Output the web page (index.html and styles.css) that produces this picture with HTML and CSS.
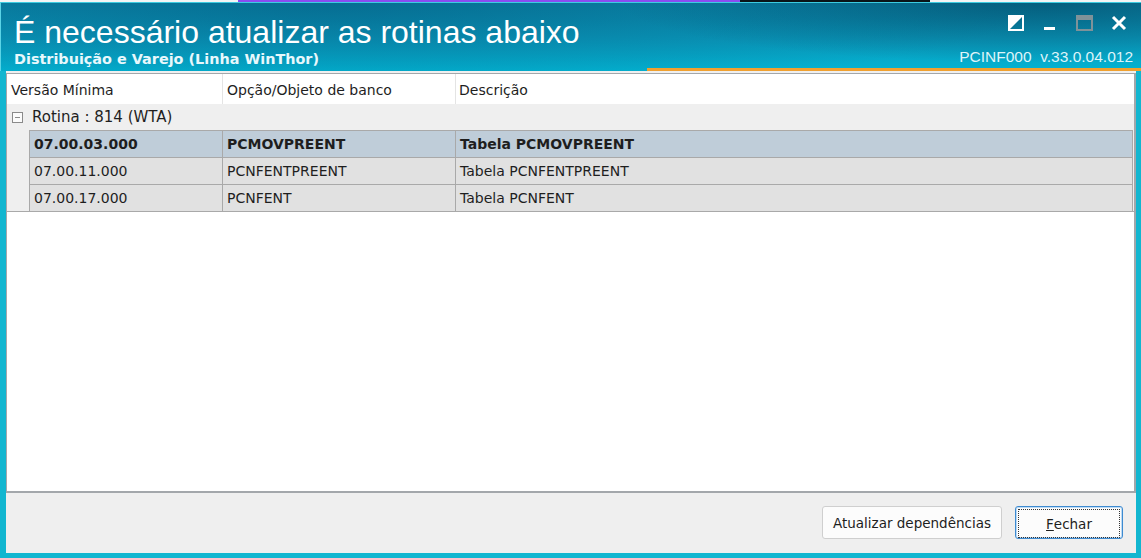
FILE: index.html
```html
<!DOCTYPE html>
<html lang="pt-BR">
<head>
    <meta charset="UTF-8">
    <title>É necessário atualizar as rotinas abaixo</title>
    <link rel="stylesheet" href="styles.css">
</head>
<body>
    <div class="win">
        <div class="behind">
            <span class="bh-white"></span>
            <span class="bh-purple"></span>
            <span class="bh-black"></span>
            <span class="bh-rest"></span>
        </div>
        <div class="titlebar">
            <div class="title-row">
                <h1>É necessário atualizar as rotinas abaixo</h1>
                <div class="ctrls">
                    <svg width="16" height="16" viewBox="0 0 16 16"><rect x="1" y="1" width="14" height="14" fill="none" stroke="#fff" stroke-width="2"/><polygon points="0,0 16,0 0,16" fill="#fff"/></svg>
                    <svg width="16" height="16" viewBox="0 0 16 16"><rect x="2" y="12" width="11" height="3" fill="#fff"/></svg>
                    <svg width="17" height="16" viewBox="0 0 17 16"><rect x="1" y="1" width="15" height="14" fill="none" stroke="#7f9299" stroke-width="2"/><rect x="1" y="1" width="15" height="4" fill="#7f9299"/></svg>
                    <svg width="16" height="16" viewBox="0 0 16 16"><path d="M2 2 L14 14 M14 2 L2 14" stroke="#fff" stroke-width="3"/></svg>
                </div>
            </div>
            <div class="sub-row">
                <span class="sub">Distribuição e Varejo (Linha WinThor)</span>
                <span class="ver">PCINF000&nbsp; v.33.0.04.012</span>
            </div>
        </div>
        <div class="client">
            <div class="grid">
                <div class="hdr">
                    <div class="c1">Versão Mínima</div>
                    <div class="c2">Opção/Objeto de banco</div>
                    <div class="c3">Descrição</div>
                </div>
                <div class="group">
                    <span class="toggle"></span>
                    <span>Rotina : 814 (WTA)</span>
                </div>
                <div class="rows">
                    <div class="row sel">
                        <div class="c1">07.00.03.000</div>
                        <div class="c2">PCMOVPREENT</div>
                        <div class="c3">Tabela PCMOVPREENT</div>
                    </div>
                    <div class="row">
                        <div class="c1">07.00.11.000</div>
                        <div class="c2">PCNFENTPREENT</div>
                        <div class="c3">Tabela PCNFENTPREENT</div>
                    </div>
                    <div class="row">
                        <div class="c1">07.00.17.000</div>
                        <div class="c2">PCNFENT</div>
                        <div class="c3">Tabela PCNFENT</div>
                    </div>
                </div>
            </div>
            <div class="actions">
                <button class="btn">Atualizar dependências</button>
                <button class="btn focus"><span class="inner"><u>F</u>echar</span></button>
            </div>
        </div>
    </div>
</body>
</html>
```

FILE: styles.css
```css
body {
    margin: 0;
    font-family: "DejaVu Sans", sans-serif;
    font-size: 14px;
    color: #1e1e1e;
}
.win {
    width: 1141px;
    height: 558px;
    display: flex;
    flex-direction: column;
    overflow: hidden;
}
.behind {
    display: flex;
    height: 2px;
}
.bh-white { width: 238px; background: #f4f4f4; }
.bh-purple { width: 502px; background: #8a4cf0; }
.bh-black { width: 190px; background: #0a1418; }
.bh-rest { flex: 1; background: #f4f4f4; }
.titlebar {
    height: 68px;
    border-top: 1px solid #3ccbe0;
    border-left: 1px solid #5ad4e6;
    background:
        radial-gradient(ellipse 420px 60px at 1040px 0px, rgba(0, 60, 90, 0.55), rgba(0, 60, 90, 0)),
        radial-gradient(ellipse 700px 90px at 330px 2px, rgba(0, 80, 120, 0.45), rgba(0, 80, 120, 0)),
        linear-gradient(180deg, #0b86a8 0%, #0a9bbd 55%, #03b3d2 100%);
    color: #fff;
    display: flex;
    flex-direction: column;
}
.title-row {
    display: flex;
    justify-content: space-between;
    height: 45px;
}
h1 {
    margin: 0;
    padding: 11px 0 0 13px;
    font-family: "Liberation Sans", Arial, sans-serif;
    font-weight: normal;
    font-size: 32px;
    line-height: 36px;
}
.ctrls {
    display: flex;
    gap: 18px;
    padding: 12px 14px 0 0;
}
.sub-row {
    display: flex;
    justify-content: space-between;
    align-items: flex-end;
    flex: 1;
}
.sub {
    font-family: "DejaVu Sans", sans-serif;
    font-weight: bold;
    font-size: 14.4px;
    padding: 0 0 4px 13px;
    color: #e8f8fc;
}
.ver {
    width: 486px;
    text-align: right;
    padding: 0 8px 2px 0;
    border-bottom: 3px solid #f0a030;
    font-family: "Liberation Sans", Arial, sans-serif;
    font-size: 15.5px;
    color: #dff4f9;
}
.client {
    flex: 1;
    background: #efefef;
    border-left: 6px solid #12b6d0;
    border-right: 5px solid #12b6d0;
    border-bottom: 5px solid #12b6d0;
    display: flex;
    flex-direction: column;
}
.grid {
    margin-top: 2px;
    height: 417px;
    background: #fff;
    border: 1px solid #a3a7ab;
    border-right-width: 2px;
    border-bottom-width: 2px;
}
.hdr, .row {
    display: grid;
    grid-template-columns: 216px 233px 1fr;
}
.hdr {
    height: 30px;
}
.hdr div {
    padding: 2px 0 0 4px;
    line-height: 28px;
}
.hdr .c1, .hdr .c2 { border-right: 1px solid #e4e4e4; }
.hdr .c3 { padding-left: 3px; }
.group {
    height: 26px;
    background: #efefef;
    display: flex;
    align-items: center;
    gap: 9px;
    padding-left: 5px;
    font-size: 15px;
}
.toggle {
    width: 9px;
    height: 9px;
    border: 1px solid #8a8a8a;
    background: linear-gradient(#8a8a8a, #8a8a8a) center / 5px 1px no-repeat, #fbfbfb;
}
.rows {
    background: #efefef;
    padding-left: 22px;
    padding-right: 1px;
    border-bottom: 1px solid #a9a9a9;
}
.row {
    grid-template-columns: 193px 233px 1fr;
    height: 26px;
    line-height: 26px;
    background: #e1e1e1;
    border-top: 1px solid #a9a9a9;
    border-left: 1px solid #a9a9a9;
    border-right: 1px solid #a9a9a9;
}
.row div { padding-left: 4px; }
.row .c1, .row .c2 { border-right: 1px solid #a9a9a9; }
.row.sel {
    background: #bfcdd9;
    font-weight: bold;
}
.actions {
    flex: 1;
    display: flex;
    justify-content: flex-end;
    align-items: flex-start;
    gap: 13px;
    padding: 13px 13px 0 0;
}
.btn {
    height: 33px;
    padding: 0 10px;
    font-family: "DejaVu Sans", sans-serif;
    font-size: 13.5px;
    color: #1e1e1e;
    background: #fcfcfc;
    border: 1px solid #cfcfcf;
    border-radius: 3px;
}
.btn.focus {
    width: 108px;
    padding: 2px;
    border: 1px solid #3d8ad0;
    box-shadow: inset 0 0 0 1px #bcdaf4;
}
.btn .inner {
    display: flex;
    justify-content: center;
    align-items: center;
    height: 100%;
    border: 1px dotted #333;
}
```
